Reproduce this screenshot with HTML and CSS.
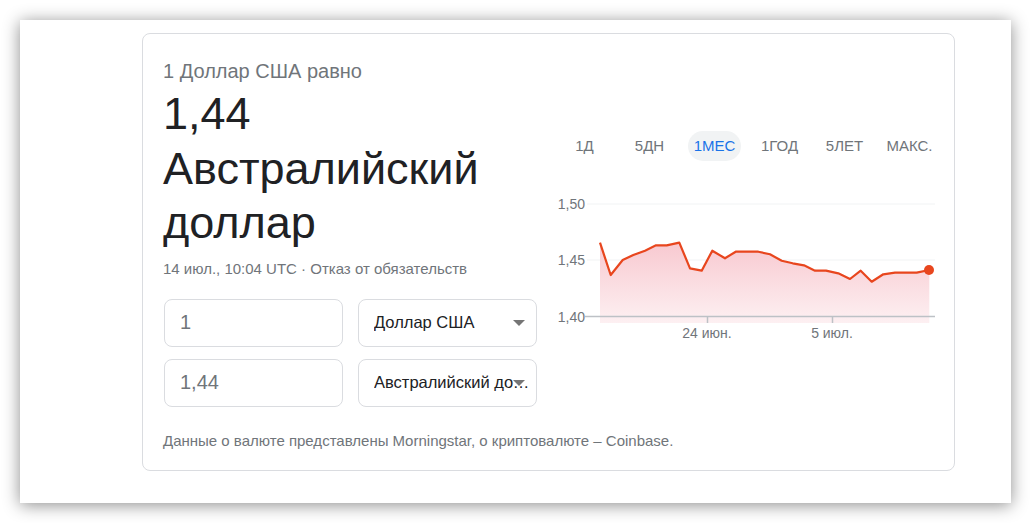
FILE: index.html
```html
<!DOCTYPE html>
<html lang="ru">
<head>
<meta charset="utf-8">
<title>Конвертер валют</title>
<link rel="stylesheet" href="styles.css">
</head>
<body>
<div class="window">
  <div class="card">
    <div class="main">
      <div class="left">
        <div class="sub">1 Доллар США равно</div>
        <div class="value">1,44<br>Австралийский<br>доллар</div>
        <div class="meta">14 июл., 10:04 UTC · Отказ от обязательств</div>
        <div class="form">
          <div class="field amount">1</div>
          <div class="field select"><span class="sel-text">Доллар США</span><span class="arrow"></span></div>
          <div class="field amount">1,44</div>
          <div class="field select"><span class="sel-text">Австралийский доллар</span><span class="arrow"></span></div>
        </div>
      </div>
      <div class="right">
        <div class="tabs">
          <div class="tab"><span>1Д</span></div>
          <div class="tab"><span>5ДН</span></div>
          <div class="tab active"><span>1МЕС</span></div>
          <div class="tab"><span>1ГОД</span></div>
          <div class="tab"><span>5ЛЕТ</span></div>
          <div class="tab"><span>МАКС.</span></div>
        </div>
        <svg class="chart" width="390" height="160" viewBox="552 190 390 160" xmlns="http://www.w3.org/2000/svg">
          <defs>
            <linearGradient id="fillg" x1="0" y1="0" x2="0" y2="1">
              <stop offset="0" stop-color="#f8c9d0"/>
              <stop offset="1" stop-color="#fdf0f2"/>
            </linearGradient>
          </defs>
          <line x1="587" y1="204" x2="935" y2="204" stroke="#f1f3f4" stroke-width="1"/>
          <line x1="587" y1="260" x2="935" y2="260" stroke="#f1f3f4" stroke-width="1"/>
          <polygon fill="url(#fillg)" points="600,242.7 610.7,275 622.7,260 633.3,255 645,250.7 656,245.3 666.7,245.3 679.3,242.7 690,268.3 701.7,270.7 712.3,250.7 725,258.3 735.7,251.7 747.3,251.7 758.3,251.7 770,254.3 781.7,260.7 792.7,263.3 804,265.3 815,270.7 826,270.7 838.3,273.3 850,279 860.7,270.7 871.7,281.7 883.3,274.3 895,272.7 916.7,272.7 929.3,270 929.3,323 600,323"/>
          <line x1="585" y1="316.5" x2="935" y2="316.5" stroke="#bdc1c6" stroke-width="1.5"/>
          <line x1="707.5" y1="316" x2="707.5" y2="323" stroke="#bdc1c6" stroke-width="1.5"/>
          <line x1="832.5" y1="316" x2="832.5" y2="323" stroke="#bdc1c6" stroke-width="1.5"/>
          <polyline fill="none" stroke="#e8461e" stroke-width="2.2" stroke-linejoin="round" points="600,242.7 610.7,275 622.7,260 633.3,255 645,250.7 656,245.3 666.7,245.3 679.3,242.7 690,268.3 701.7,270.7 712.3,250.7 725,258.3 735.7,251.7 747.3,251.7 758.3,251.7 770,254.3 781.7,260.7 792.7,263.3 804,265.3 815,270.7 826,270.7 838.3,273.3 850,279 860.7,270.7 871.7,281.7 883.3,274.3 895,272.7 916.7,272.7 929.3,270"/>
          <circle cx="929" cy="270" r="5" fill="#e8461e"/>
          <text class="ylab" x="585" y="208.5" text-anchor="end">1,50</text>
          <text class="ylab" x="585" y="265" text-anchor="end">1,45</text>
          <text class="ylab" x="585" y="321.5" text-anchor="end">1,40</text>
          <text class="xlab" x="707" y="338" text-anchor="middle">24 июн.</text>
          <text class="xlab" x="832" y="338" text-anchor="middle">5 июл.</text>
        </svg>
      </div>
    </div>
    <div class="footer">Данные о валюте представлены Morningstar, о криптовалюте – Coinbase.</div>
  </div>
</div>
</body>
</html>
```

FILE: styles.css
```css
html, body {
  margin: 0;
  padding: 0;
  background: #ffffff;
}
body {
  font-family: "Liberation Sans", Arial, sans-serif;
  padding: 20px;
  width: 1031px;
  height: 523px;
  box-sizing: border-box;
}
.window {
  width: 991px;
  height: 483px;
  background: #ffffff;
  box-shadow: 0 2px 16px rgba(0, 0, 0, 0.45);
  padding: 13px 0 0 122px;
  box-sizing: border-box;
}
.card {
  width: 813px;
  height: 438px;
  box-sizing: border-box;
  border: 1px solid #dadce0;
  border-radius: 8px;
  padding: 23px 12px 0 20px;
  display: flex;
  flex-direction: column;
}
.main {
  display: flex;
  gap: 15px;
}
.left {
  width: 374px;
}
.sub {
  font-size: 20px;
  line-height: 28px;
  color: #70757a;
}
.value {
  font-size: 45px;
  line-height: 54.5px;
  color: #202124;
  margin-top: 2px;
}
.meta {
  font-size: 15px;
  line-height: 20px;
  color: #70757a;
  margin-top: 8px;
}
.form {
  display: grid;
  grid-template-columns: 179px 179px;
  column-gap: 15px;
  row-gap: 12px;
  margin-top: 20px;
  padding-left: 1px;
}
.field {
  height: 48px;
  box-sizing: border-box;
  border: 1px solid #dadce0;
  border-radius: 8px;
  display: flex;
  align-items: center;
}
.amount {
  font-size: 20px;
  color: #70757a;
  padding-left: 15px;
}
.select {
  position: relative;
  font-size: 16.5px;
  color: #202124;
  padding-left: 15px;
  padding-right: 5px;
}
.sel-text {
  flex: 1;
  white-space: nowrap;
  overflow: hidden;
  text-overflow: ellipsis;
  min-width: 0;
}
.arrow {
  position: absolute;
  right: 11px;
  top: 20px;
  width: 0;
  height: 0;
  border-left: 6px solid transparent;
  border-right: 6px solid transparent;
  border-top: 6px solid #757575;
}
.right {
  width: 390px;
}
.tabs {
  display: flex;
  margin-top: 74px;
}
.tab {
  flex: 1;
  display: flex;
  justify-content: center;
  font-size: 15px;
  color: #70757a;
}
.tab span {
  height: 30px;
  line-height: 30px;
  padding: 0 6px;
  border-radius: 15px;
}
.tab.active span {
  background: #f1f3f4;
  color: #1a73e8;
}
.chart {
  display: block;
  margin-top: 29px;
}
.ylab, .xlab {
  font-family: "Liberation Sans", Arial, sans-serif;
  font-size: 14px;
  fill: #70757a;
}
.footer {
  font-size: 15px;
  line-height: 20px;
  color: #70757a;
  margin-top: auto;
  margin-bottom: 19px;
}
```
